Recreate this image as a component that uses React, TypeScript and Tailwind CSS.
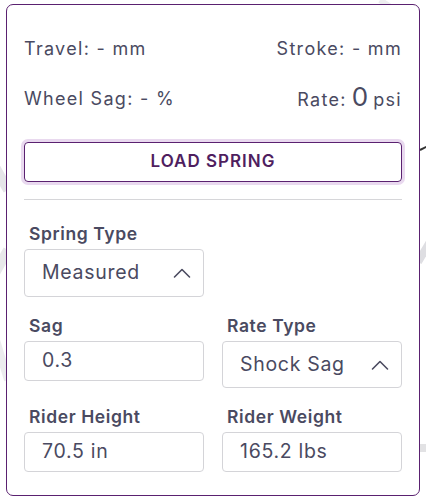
import React from "react";

const text = {
  travel: "Travel:",
  stroke: "Stroke:",
  wheelSag: "Wheel Sag:",
  rate: "Rate:",
  loadSpring: "LOAD SPRING",
  springType: "Spring Type",
  sag: "Sag",
  rateType: "Rate Type",
  riderHeight: "Rider Height",
  riderWeight: "Rider Weight",
};

const ChevronUp = () => (
  <svg width="18" height="12" viewBox="0 0 18 12" fill="none" className="shrink-0">
    <polyline points="1.5,10 9,2.5 16.5,10" stroke="#4b4b60" strokeWidth="1.6" strokeLinecap="round" strokeLinejoin="round" />
  </svg>
);

const Label = ({ children }: { children: React.ReactNode }) => (
  <div className="h-[20px] pl-[5px] text-[17.5px] font-semibold leading-[20px] tracking-[0.6px] text-[#4a4a61]">{children}</div>
);

const Select = ({ value, height }: { value: string; height: string }) => (
  <div className={`${height} mt-[5px] flex items-center justify-between rounded-[4px] border border-[#d4d4d8] pl-[17px] pr-[12px] text-[19.5px] tracking-[0.7px] text-[#4a4a61]`}>
    <span>{value}</span>
    <ChevronUp />
  </div>
);

const Field = ({ value }: { value: string }) => (
  <div className="mt-[5px] flex h-[40px] items-center rounded-[4px] border border-[#d4d4d8] pl-[17px] text-[19.5px] tracking-[0.7px] text-[#4a4a61]">
    {value}
  </div>
);

export default function App() {
  return (
    <div className="relative h-[502px] w-[426px] overflow-hidden bg-white px-[6px] pt-[4px] font-['Inter',sans-serif]">
      {/* faint backdrop strokes */}
      <svg className="absolute inset-0" width="426" height="502" viewBox="0 0 426 502">
        <path d="M-20 140 L8 190" stroke="#e5e5e8" strokeWidth="10" />
        <path d="M8 250 L-20 300" stroke="#e8e8ea" strokeWidth="10" />
        <path d="M-10 320 L8 380" stroke="#ececee" strokeWidth="8" />
        <path d="M440 225 L418 262" stroke="#dedee2" strokeWidth="8" />
        <path d="M420 150 L428 146" stroke="#333" strokeWidth="2" />
        <path d="M419 448 L430 448" stroke="#e2e2e4" strokeWidth="8" />
        <path d="M380 0 L395 10" stroke="#ededef" strokeWidth="6" />
      </svg>
      <div className="relative h-[492px] rounded-[7px] border border-[#5a2170] bg-white px-[17px] pt-[31px]">
        <div className="flex h-[24px] items-center justify-between text-[18px] tracking-[1.3px] text-[#4a4a61]">
          <span>{text.travel} - mm</span>
          <span>{text.stroke} - mm</span>
        </div>
        <div className="mt-[26px] flex h-[24px] items-center justify-between text-[18px] tracking-[1.3px] text-[#4a4a61]">
          <span>{text.wheelSag} - %</span>
          <span className="flex items-baseline">
            {text.rate}
            <span className="ml-[5px] mr-[5px] text-[26px] leading-none tracking-normal">0</span>
            psi
          </span>
        </div>
        <button className="mt-[32px] flex h-[40px] w-full items-center justify-center rounded-[4px] border border-[#5a2170] text-[17px] font-semibold tracking-[1px] text-[#4f1e5f] shadow-[0_0_0_3px_#e9d9ef]">
          {text.loadSpring}
        </button>
        <div className="mt-[17px] h-px bg-[#d6d6d9]" />
        <div className="mt-[24px] w-[180px]">
          <Label>{text.springType}</Label>
          <Select value="Measured" height="h-[48px]" />
        </div>
        <div className="mt-[19px] grid grid-cols-2 gap-x-[18px]">
          <div>
            <Label>{text.sag}</Label>
            <Field value="0.3" />
          </div>
          <div>
            <Label>{text.rateType}</Label>
            <Select value="Shock Sag" height="h-[47px]" />
          </div>
          <div className="mt-[19px]">
            <Label>{text.riderHeight}</Label>
            <Field value="70.5 in" />
          </div>
          <div className="mt-[19px]">
            <Label>{text.riderWeight}</Label>
            <Field value="165.2 lbs" />
          </div>
        </div>
      </div>
    </div>
  );
}
